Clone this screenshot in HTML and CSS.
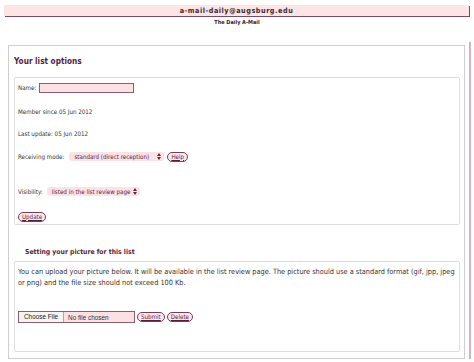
FILE: index.html
```html
<!DOCTYPE html>
<html lang="en">
<head>
    <meta charset="UTF-8">
    <title>The Daily A-Mail</title>
    <link rel="stylesheet" href="styles.css">
</head>
<body>
    <div class="topbar">a-mail-daily@augsburg.edu</div>
    <div class="subtitle">The Daily A-Mail</div>

    <div class="main">
        <div class="panel">
            <h2 class="title">Your list options</h2>
            <div class="box">
                <div class="row r-name">Name: <span class="field"></span></div>
                <div class="row r-member">Member since 05 Jun 2012</div>
                <div class="row r-update">Last update: 05 Jun 2012</div>
                <div class="row r-mode">Receiving mode:
                    <span class="select sel-mode">standard (direct reception)
                        <svg class="arrows" width="4" height="7" viewBox="0 0 4 7"><path d="M0 3L2 0L4 3Z M0 4L2 7L4 4Z" fill="#5a2a40"/></svg>
                    </span>
                    <span class="btn">Help</span>
                </div>
                <div class="row r-vis">Visibility:
                    <span class="select sel-vis">listed in the list review page
                        <svg class="arrows" width="4" height="7" viewBox="0 0 4 7"><path d="M0 3L2 0L4 3Z M0 4L2 7L4 4Z" fill="#5a2a40"/></svg>
                    </span>
                </div>
                <div class="row r-btn"><span class="btn">Update</span></div>
            </div>

            <h3 class="subhead">Setting your picture for this list</h3>
            <div class="box box-pic">
                <p class="note">You can upload your picture below. It will be available in the list review page. The picture should use a standard format (gif, jpp, jpeg or png) and the file size should not exceed 100 Kb.</p>
                <div class="row r-file">
                    <span class="file"><span class="choose">Choose File</span><span class="nofile">No file chosen</span></span>
                    <span class="btn">Submit</span>
                    <span class="btn">Delete</span>
                </div>
            </div>
        </div>
    </div>
    <div class="band"></div>
</body>
</html>
```

FILE: styles.css
```css
body{margin:0;background:#fff;font-family:"DejaVu Sans Condensed","DejaVu Sans",sans-serif;font-stretch:condensed;color:#333;font-size:6.2px;}
h2,h3,p{margin:0;}

.topbar{margin:5px 0 0 4px;width:465px;height:11px;line-height:11px;background:#fde4e5;box-shadow:1px 1px 0 #7a4a62;
text-align:center;font-size:7.2px;font-weight:bold;letter-spacing:0.55px;color:#3a2a30;}
.subtitle{margin-top:2px;text-align:center;font-size:5.5px;font-weight:bold;color:#3a1a2a;height:9px;line-height:9px;}

.main{margin-top:15px;width:469px;border-right:2px solid #d3b2c3;padding-top:3px;}
.panel{margin-left:8px;border:1px solid #cfcfcf;padding:0 4px 6px 5px;box-sizing:border-box;width:457px;}

.title{font-size:8.2px;font-weight:bold;color:#5a1c3c;height:31px;line-height:30px;}
.subhead{font-size:6.8px;font-weight:bold;color:#5a1c3c;height:36px;line-height:14px;padding:20px 0 0 11px;box-sizing:border-box;}

.box{border:1px solid #dedede;border-radius:2px;padding:4px 3px 2px 3px;display:flex;flex-direction:column;}
.row{height:11px;line-height:11px;display:flex;align-items:center;white-space:nowrap;}
.r-member{margin-top:13px;}
.r-update{margin-top:11px;}
.r-mode{margin-top:12px;}
.r-vis{margin-top:24px;}
.r-btn{margin-top:14px;}

.field{display:inline-block;width:93px;height:8px;margin-left:3px;background:#fde0e2;border:1px solid #8a6070;}

.select{display:inline-flex;align-items:center;justify-content:space-between;height:9px;margin-left:5px;padding:0 3px 0 5px;background:#fbe2e5;border-radius:3px;color:#5a1c3c;box-sizing:border-box;}
.sel-mode{width:95px;}
.sel-vis{width:93px;margin-left:4px;}
.arrows{display:block;}

.btn{display:inline-block;height:8px;line-height:8px;padding:0 3px;border:1px solid #7a3a5a;border-radius:5px;background:#fde8ec;color:#5a1c3c;text-decoration:underline;margin-left:3px;}
.r-btn .btn{margin-left:0;}

.box-pic{padding:4px 3px 28px 3px;}
.note{font-size:7.3px;line-height:11px;}
.r-file{margin-top:23px;height:12px;}
.r-file .btn{margin-left:2px;}
.file{display:inline-flex;align-items:center;width:115px;height:10px;border:1px solid #8a6070;background:#fde0e2;font-family:"Liberation Sans",Arial,sans-serif;font-size:6.4px;}
.choose{height:10px;line-height:10px;padding:0 5px;background:#f4f4f4;border-right:1px solid #aaa;color:#222;}
.nofile{padding-left:4px;color:#333;}

.band{margin:3px 0 0 3px;height:4px;background:#d3b2c3;}
```
